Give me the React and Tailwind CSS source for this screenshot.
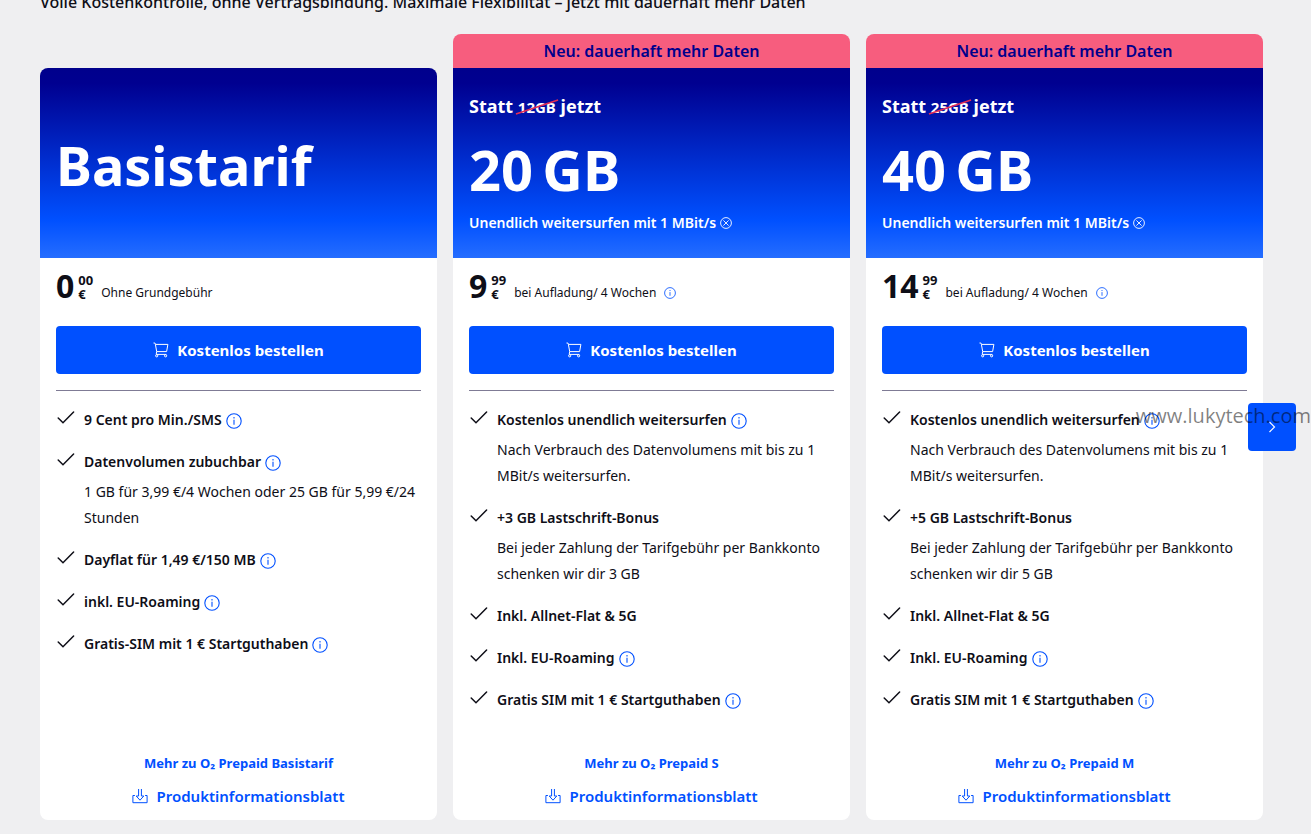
const INFO_LABEL = 'Mehr Informationen';

const PLANS = [
  {
    id: 'basis',
    title: 'Basistarif',
    euros: '0',
    cents: '00',
    note: 'Ohne Grundgebühr',
    link: 'Prepaid Basistarif',
    features: [
      { title: '9 Cent pro Min./SMS', info: true },
      { title: 'Datenvolumen zubuchbar', info: true, text: '1 GB für 3,99 €/4 Wochen oder 25 GB für 5,99 €/24 Stunden' },
      { title: 'Dayflat für 1,49 €/150 MB', info: true },
      { title: 'inkl. EU-Roaming', info: true },
      { title: 'Gratis-SIM mit 1 € Startguthaben', info: true },
    ],
  },
  {
    id: 's',
    badge: 'Neu: dauerhaft mehr Daten',
    before: '12GB',
    title: '20\u2009GB',
    speed: 'Unendlich weitersurfen mit 1 MBit/s',
    euros: '9',
    cents: '99',
    note: 'bei Aufladung/ 4 Wochen',
    noteInfo: true,
    link: 'Prepaid S',
    features: [
      { title: 'Kostenlos unendlich weitersurfen', info: true, text: 'Nach Verbrauch des Datenvolumens mit bis zu 1 MBit/s weitersurfen.' },
      { title: '+3 GB Lastschrift-Bonus', text: 'Bei jeder Zahlung der Tarifgebühr per Bankkonto schenken wir dir 3 GB' },
      { title: 'Inkl. Allnet-Flat & 5G' },
      { title: 'Inkl. EU-Roaming', info: true },
      { title: 'Gratis SIM mit 1 € Startguthaben', info: true },
    ],
  },
  {
    id: 'm',
    badge: 'Neu: dauerhaft mehr Daten',
    before: '25GB',
    title: '40\u2009GB',
    speed: 'Unendlich weitersurfen mit 1 MBit/s',
    euros: '14',
    cents: '99',
    note: 'bei Aufladung/ 4 Wochen',
    noteInfo: true,
    link: 'Prepaid M',
    features: [
      { title: 'Kostenlos unendlich weitersurfen', info: true, text: 'Nach Verbrauch des Datenvolumens mit bis zu 1 MBit/s weitersurfen.' },
      { title: '+5 GB Lastschrift-Bonus', text: 'Bei jeder Zahlung der Tarifgebühr per Bankkonto schenken wir dir 5 GB' },
      { title: 'Inkl. Allnet-Flat & 5G' },
      { title: 'Inkl. EU-Roaming', info: true },
      { title: 'Gratis SIM mit 1 € Startguthaben', info: true },
    ],
  },
];

function InfoButton({ small }) {
  return (
    <button type="button" aria-label={INFO_LABEL} className={`shrink-0 text-[#0050ff] ${small ? '' : 'pt-0.5'}`}>
      <svg viewBox="0 0 16 16" fill="none" stroke="currentColor" strokeWidth="1.1" className={small ? 'block size-3' : 'block size-4'} aria-hidden="true">
        <circle cx="8" cy="8" r="7.2" />
        <path d="M8 6.8v4.9M8 4v1.4" />
      </svg>
    </button>
  );
}

function CheckIcon() {
  return (
    <svg viewBox="0 0 20 20" fill="none" stroke="#0e0e17" strokeWidth="1.5" strokeLinecap="round" className="block size-5" aria-hidden="true">
      <path d="M2.2 11 7 15.8 17.6 5" />
    </svg>
  );
}

function CartIcon() {
  return (
    <svg viewBox="0 0 16 16" fill="none" stroke="currentColor" strokeLinejoin="round" className="block size-4" aria-hidden="true">
      <path d="M.5 1h1.4l.5 1.4h12.5l-1.3 7.2H3.7L2.4 2.4M3.7 9.6l-.5 2.8h10.2" />
      <circle cx="3.7" cy="13.8" r="1.1" />
      <circle cx="12.6" cy="13.8" r="1.1" />
    </svg>
  );
}

function DownloadIcon() {
  return (
    <svg viewBox="0 0 16 16" fill="none" stroke="currentColor" className="block size-4" aria-hidden="true">
      <path d="M2.9 7.5H.9v7.2h14.2V7.5h-2" />
      <path d="M6.6 1v7H4.2L8 12.2 11.8 8H9.4V1" />
    </svg>
  );
}

function PlanHero({ plan }) {
  return (
    <div
      className={`flex h-[190px] flex-col px-4 text-white bg-[linear-gradient(180deg,#00008c_0%,#000090_8%,#0050ff_80%,#256dff_100%)] ${plan.badge ? '' : 'justify-center rounded-t-lg pt-1'}`}
    >
      {plan.before && (
        <p className="mt-[26px] text-lg leading-6 font-bold">
          Statt{' '}
          <span className="relative inline-block text-[15px]">
            {plan.before}
            <svg viewBox="0 0 46 16" preserveAspectRatio="none" className="absolute inset-x-[-3px] top-1 h-4 w-[calc(100%+6px)]" aria-hidden="true">
              <path d="M1 15 45 1" stroke="#e22d55" strokeWidth="1.8" />
            </svg>
          </span>{' '}
          jetzt
        </p>
      )}
      <h2 className={`leading-[64px] font-bold ${plan.before ? 'mt-[18px] text-[56px]' : 'text-[54px]'}`}>{plan.title}</h2>
      {plan.speed && (
        <p className="mt-2.5 flex items-center gap-1 text-sm leading-6 font-semibold">
          {plan.speed}
          <svg viewBox="0 0 12 12" fill="none" stroke="currentColor" className="size-3" aria-hidden="true">
            <circle cx="6" cy="6" r="5.4" strokeWidth=".9" />
            <path d="m3.4 3.4 5.2 5.2m0-5.2L3.4 8.6" strokeWidth=".9" />
          </svg>
        </p>
      )}
    </div>
  );
}

function PlanCard({ plan }) {
  return (
    <article className="flex flex-col">
      {plan.badge ? (
        <p className="rounded-t-lg bg-[#f75d7e] text-center text-base leading-[34px] font-semibold text-[#00008c]">{plan.badge}</p>
      ) : (
        <div className="h-[34px]" />
      )}
      <PlanHero plan={plan} />
      <div className="flex flex-1 flex-col rounded-b-lg bg-white px-4 pb-3">
        <div className="flex h-[68px] items-start pt-3">
          <span className="text-[32px] leading-8 font-bold">{plan.euros}</span>
          <span className="ml-1 flex flex-col pt-[3px] text-[13px] leading-[14px] font-bold">
            <span>{plan.cents}</span>
            <span>€</span>
          </span>
          <span className="ml-2 flex items-center gap-2 pt-3 text-xs leading-[22px]">
            {plan.note}
            {plan.noteInfo && <InfoButton small />}
          </span>
        </div>
        <button type="button" className="flex h-12 w-full items-center justify-center gap-2 rounded bg-[#0050ff] text-[15px] font-bold text-white">
          <CartIcon />
          Kostenlos bestellen
        </button>
        <hr className="mt-4 border-[#7f7b95]" />
        <ul className="mt-4 flex flex-col gap-4 text-sm leading-[26px]">
          {plan.features.map((f) => (
            <li key={f.title} className="flex gap-2">
              <span className="shrink-0">
                <CheckIcon />
              </span>
              <div>
                <div className="flex items-center gap-1">
                  <h3 className="font-semibold">{f.title}</h3>
                  {f.info && <InfoButton />}
                </div>
                {f.text && <p className="mt-1">{f.text}</p>}
              </div>
            </li>
          ))}
        </ul>
        <div className="mt-auto flex flex-col items-center gap-2 pt-[37px] text-[#0050ff]">
          <a href="#tarif" className="text-[13px] leading-[26px] font-bold">
            Mehr zu O₂ {plan.link}
          </a>
          <a href="#produktinformationsblatt" className="flex items-center gap-2 text-[15px] leading-6 font-semibold">
            <DownloadIcon />
            Produktinformationsblatt
          </a>
        </div>
      </div>
    </article>
  );
}

export default function App() {
  return (
    <main className="relative flex min-h-screen flex-col overflow-hidden bg-[#efeff1] pb-3.5 font-['Noto_Sans','Open_Sans',sans-serif] text-[#0e0e17]">
      <p className="-mt-2.5 mb-5 px-10 text-base leading-6 font-medium">
        Volle Kostenkontrolle, ohne Vertragsbindung. Maximale Flexibilität – jetzt mit dauerhaft mehr Daten
      </p>
      <section className="relative pr-12 pl-10" aria-label="Prepaid-Tarife">
        <div className="grid grid-cols-3 gap-4">
          {PLANS.map((plan) => (
            <PlanCard key={plan.id} plan={plan} />
          ))}
        </div>
        <button
          type="button"
          aria-label="Nächste Tarife"
          className="absolute top-1/2 right-[15px] flex size-12 -translate-y-1/2 items-center justify-center rounded bg-[#0050ff] text-white"
        >
          <svg viewBox="0 0 16 16" fill="none" stroke="currentColor" strokeWidth="1.2" className="size-4" aria-hidden="true">
            <path d="m5.5 3 5 5-5 5" />
          </svg>
        </button>
      </section>
      <span className="pointer-events-none absolute top-[400px] right-0 font-['Open_Sans',sans-serif] text-xl leading-8 text-black/50">
        www.lukytech.com
      </span>
    </main>
  );
}
